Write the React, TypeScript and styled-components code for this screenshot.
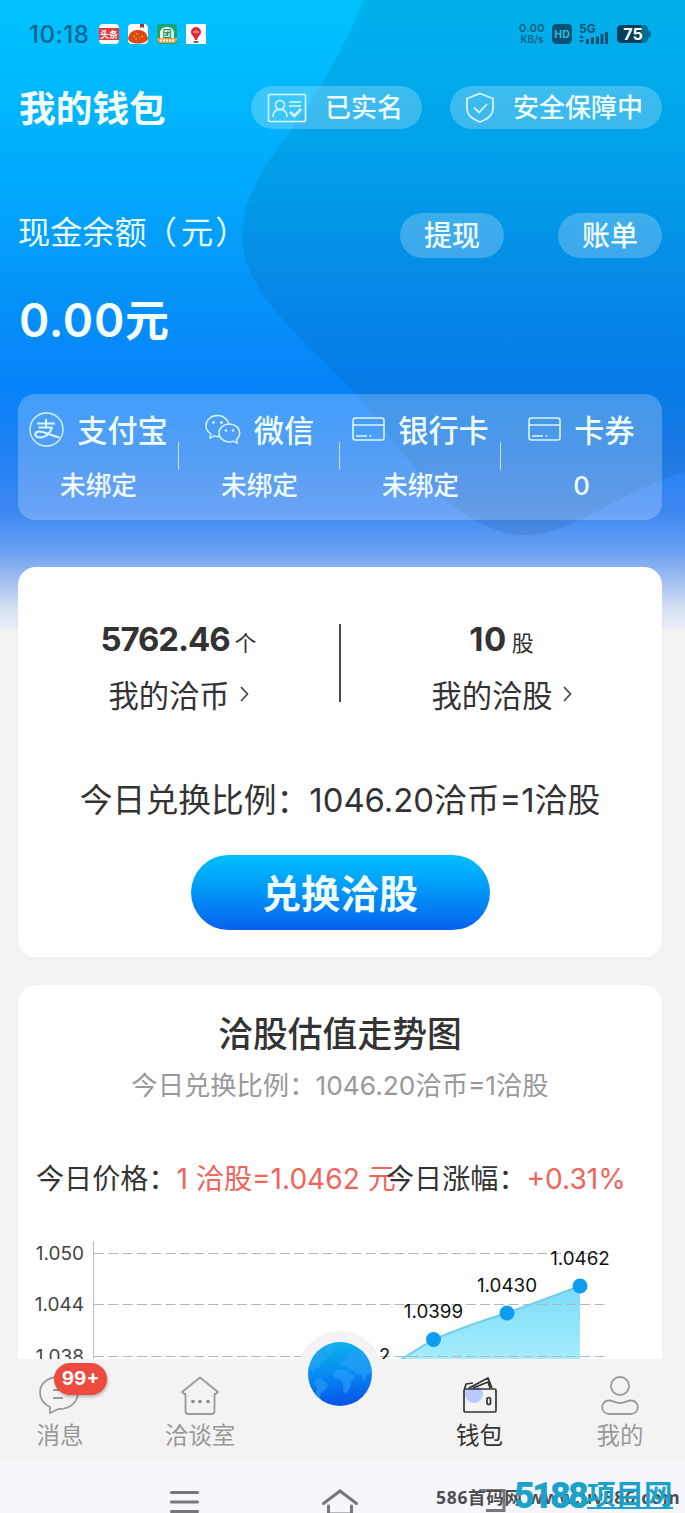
import React from 'react';
import styled, { createGlobalStyle } from 'styled-components';

const Global = createGlobalStyle`
  * { box-sizing: border-box; }
  body { margin: 0; background: #f3f3f3; }
  #root { font-family: Inter, "Noto Sans CJK SC", sans-serif; }
`;

const Screen = styled.div`
  position: relative;
  width: 685px;
  height: 1513px;
  overflow: hidden;
  display: flex;
  flex-direction: column;
  color: #333;
  background: linear-gradient(
      180deg,
      #00c2fe 0,
      #00b4fd 120px,
      #02a6fb 200px,
      #0691f9 300px,
      #0583f8 385px,
      #1f80f4 450px,
      #3c87f2 510px,
      #689ff1 550px,
      #aac4f0 585px,
      #d8e2f3 610px,
      #e9ebf5 628px,
      #f3f3f3 629px
    )
    #f3f3f3;
`;

const Backdrop = styled.svg`
  position: absolute;
  left: 0;
  top: 0;
`;

const Row = styled.div`
  display: flex;
  align-items: center;
`;

const StatusBar = styled(Row)`
  position: relative;
  height: 68px;
  padding: 0 34px 0 29px;
  justify-content: space-between;
  color: #07658f;
`;

const Clock = styled.span`
  font-size: 24px;
  font-weight: 500;
  width: 60px;
  margin-right: 10px;
  white-space: nowrap;
  letter-spacing: 0.5px;
`;

const AppIcons = styled(Row)`
  gap: 9px;
`;

const StatusRight = styled(Row)`
  gap: 7px;
`;

const Speed = styled.div`
  display: flex;
  flex-direction: column;
  align-items: center;
  width: 26px;
  font-size: 11px;
  line-height: 11px;
  font-weight: 600;
  white-space: nowrap;
  color: #07607f;
  span:first-child {
    letter-spacing: 0.3px;
  }
  span:last-child {
    font-size: 10px;
  }
`;

const TitleRow = styled(Row)`
  position: relative;
  height: 78px;
  padding: 0 23px 0 19px;
`;

const PageTitle = styled.h1`
  margin: 3px 0 0;
  flex: 1;
  font-size: 36.7px;
  line-height: 48px;
  font-weight: 700;
  color: #f2fdff;
`;

const Pill = styled.button<{ $w: number; $h: number; $ml: number; $icon?: boolean }>`
  display: flex;
  align-items: center;
  justify-content: ${p => (p.$icon ? 'flex-start' : 'center')};
  width: ${p => p.$w}px;
  height: ${p => p.$h}px;
  margin-left: ${p => p.$ml}px;
  padding: 2px ${p => (p.$icon ? 15 : 0)}px 0;
  gap: 18px;
  border: 0;
  border-radius: 23px;
  background: rgba(255, 255, 255, 0.23);
  color: #effdff;
  font: 500 ${p => (p.$icon ? 26 : 28)}px/38px Inter, 'Noto Sans CJK SC', sans-serif;
  white-space: nowrap;
`;

const BalanceRow = styled(Row)`
  position: relative;
  height: 46px;
  margin-top: 66px;
  padding: 0 23px 0 18px;
`;

const BalanceLabel = styled.div`
  flex: 1;
  font-size: 32.2px;
  line-height: 44px;
  margin-top: -4px;
  color: #e9fcff;
`;

const Paren = styled.span<{ $open?: boolean }>`
  margin: ${p => (p.$open ? '0 4px 0 -2px' : '0 0 0 2px')};
`;

const Balance = styled.div`
  position: relative;
  margin: 30px 0 0 19px;
  height: 64px;
  font-size: 46px;
  line-height: 64px;
  font-weight: 600;
  letter-spacing: 0.7px;
  color: #f5feff;
  small {
    font-size: 44px;
    font-weight: 700;
  }
`;

const Methods = styled.div`
  position: relative;
  display: grid;
  grid-template-columns: repeat(4, 161px);
  margin: 42px 23px 0 18px;
  height: 126px;
  border-radius: 17px;
  background: rgba(255, 255, 255, 0.23);
`;

const Method = styled.div`
  position: relative;
  display: flex;
  flex-direction: column;
  align-items: center;
  padding-top: 13px;
  color: #effdff;
  &:not(:last-child)::after {
    content: '';
    position: absolute;
    right: 0;
    top: 48px;
    width: 1px;
    height: 28px;
    background: rgba(255, 255, 255, 0.7);
  }
`;

const MethodName = styled(Row)`
  height: 44px;
  gap: 13px;
  font-size: 30.2px;
  font-weight: 500;
  white-space: nowrap;
`;

const MethodState = styled.div`
  margin-top: 16px;
  font-size: 25.7px;
  line-height: 38px;
  font-weight: 500;
`;

const Card = styled.section<{ $mt: number; $h: number; $open?: boolean }>`
  position: relative;
  display: flex;
  flex-direction: column;
  align-items: center;
  flex: none;
  margin: ${p => p.$mt}px 23px 0 18px;
  height: ${p => p.$h}px;
  border-radius: ${p => (p.$open ? '18px 18px 0 0' : '18px')};
  background: #fff;
`;

const Holdings = styled.div`
  display: grid;
  grid-template-columns: 321px 2px 321px;
  align-items: start;
  width: 100%;
  height: 78px;
  margin-top: 57px;
`;

const Rule = styled.div`
  height: 78px;
  background: #4a4a4a;
`;

const Holding = styled.div`
  display: flex;
  flex-direction: column;
  align-items: center;
  margin-top: -6px;
`;

const Amount = styled.div<{ $spacing: number }>`
  font-size: 33px;
  line-height: 42px;
  font-weight: 700;
  letter-spacing: ${p => p.$spacing}px;
  small {
    margin-left: 5px;
    font-size: 22px;
    font-weight: 400;
    letter-spacing: 0;
  }
`;

const HoldingName = styled(Row)`
  margin-top: 9px;
  height: 42px;
  gap: 10px;
  font-size: 30.3px;
`;

const Ratio = styled.div`
  margin-top: 75px;
  font-size: 32.8px;
  line-height: 46px;
  white-space: nowrap;
`;

const Exchange = styled.button`
  width: 299px;
  height: 75px;
  margin-top: 32px;
  padding: 0 0 3px;
  border: 0;
  border-radius: 38px;
  background: linear-gradient(180deg, #00bcfc 5%, #0096f8 48%, #0763ee 98%);
  color: #f0fdff;
  font: 700 39px/66px 'Noto Sans CJK SC', sans-serif;
`;

const ChartTitle = styled.h2`
  margin: 24px 0 0;
  font-size: 34.8px;
  line-height: 50px;
  font-weight: 500;
`;

const ChartSub = styled.div`
  margin-top: 8px;
  font-size: 26.3px;
  line-height: 38px;
  color: #999;
  white-space: nowrap;
`;

const Quotes = styled.div`
  display: grid;
  grid-template-columns: 350px 1fr;
  width: 100%;
  padding-left: 18px;
  margin-top: 53px;
  font-size: 28.1px;
  line-height: 42px;
  white-space: nowrap;
  color: #333;
  em {
    font-style: normal;
    color: #f0645a;
  }
`;

const Chart = styled.svg`
  margin-top: 40px;
  flex: none;
  align-self: flex-start;
  font-family: Inter, sans-serif;
`;

const TabBar = styled.nav`
  position: relative;
  flex: none;
  display: grid;
  grid-template-columns: 120px 160px 119px 161px 120px;
  height: 102px;
  background: #f3f3f3;
`;

const Tab = styled.div<{ $active?: boolean }>`
  position: relative;
  display: flex;
  flex-direction: column;
  align-items: center;
  padding-top: 14px;
  font-size: 23.5px;
  line-height: 33px;
  color: ${p => (p.$active ? '#333' : '#999')};
`;

const Badge = styled.span`
  position: absolute;
  left: 54px;
  top: 4px;
  width: 53px;
  height: 32px;
  border-radius: 16px;
  background: #ec4b3d;
  color: #fff;
  font-size: 19px;
  line-height: 32px;
  font-weight: 700;
  text-align: center;
  box-shadow: 1px 2px 3px rgba(0, 0, 0, 0.25);
`;

const GlobeTab = styled.div`
  position: relative;
`;

const GlobeHolder = styled.div`
  position: absolute;
  left: 17px;
  top: -28px;
  width: 86px;
  height: 86px;
  padding: 11px;
  border-radius: 50%;
  background: #f3f3f5;
`;

const SystemNav = styled.div`
  position: relative;
  display: flex;
  flex: none;
  height: 52px;
  padding: 28px 0 0 169px;
  gap: 121px;
  background: #f6f6fc;
`;

const SiteMark = styled.div`
  position: absolute;
  left: 436px;
  top: 23px;
  width: 249px;
  font: 700 17.5px/26px 'Open Sans', 'Noto Sans CJK SC', sans-serif;
  letter-spacing: 0.7px;
  color: #4e4e52;
  white-space: nowrap;
`;

const BrandMark = styled.div`
  position: absolute;
  left: 514px;
  top: 18px;
  display: flex;
  align-items: center;
  height: 30px;
  font: 700 29px/30px 'Noto Sans CJK SC', sans-serif;
  color: #1ba2c9;
  white-space: nowrap;
  b {
    width: 73px;
    padding-top: 4px;
    font: 900 36px/32px Roboto, sans-serif;
    letter-spacing: -2.9px;
  }
  span {
    height: 29px;
    line-height: 26px;
    font-size: 28.5px;
    border-bottom: 2px solid #1ba2c9;
  }
`;

const Chevron = () => (
  <svg width="9" height="16" viewBox="0 0 9 16" fill="none" stroke="#444" strokeWidth="1.7">
    <path d="M1 1l6.5 7L1 15" />
  </svg>
);

const CardIcon = () => (
  <svg width="33" height="24" viewBox="0 0 33 24" fill="none" stroke="#d9f8ff" strokeWidth="1.6">
    <rect x="1" y="1" width="31" height="22" rx="2.5" />
    <path d="M1 8h31M4 19h11M17.500 19h2M22 19h.1" />
  </svg>
);

const methods = [
  {
    name: '支付宝',
    state: '未绑定',
    icon: (
      <svg width="35" height="35" viewBox="0 0 35 35" fill="none" stroke="#d9f8ff">
        <circle cx="17.500" cy="17.500" r="16.500" strokeWidth="1.3" />
        <path d="M8 11.500h18M17 7v8.500M9.500 15.500h14" strokeWidth="2" />
        <path d="M23 15.500C21 22 16 25.500 11 25.500c-6 0-6-6-1-6 6 0 11 4 20.500 6" strokeWidth="2.200" />
      </svg>
    ),
  },
  {
    name: '微信',
    state: '未绑定',
    icon: (
      <svg width="36" height="30" viewBox="0 0 36 30" fill="none" stroke="#d9f8ff" strokeWidth="1.4">
        <path d="M14.500 22.500c-1.700.2-3.500 0-5-.6L5 24l.9-4.200C2.700 17.800 1 14.900 1 12 1 6 6 1.500 12.500 1.500c5.500 0 10 3.500 11.200 8.200" />
        <path d="M24.300 10C18.600 10 14 14 14 19s4.600 9 10.300 9c1.500 0 2.900-.3 4.200-.8l3.700 1.800-.8-3.500c2-1.600 3.300-3.900 3.300-6.500 0-5-4.600-9-10.400-9z" />
        <g fill="#d9f8ff" stroke="none">
          <circle cx="8.500" cy="8.500" r="1.400" />
          <circle cx="16.500" cy="8.500" r="1.400" />
          <circle cx="21" cy="16.500" r="1.300" />
          <circle cx="28" cy="16.500" r="1.300" />
        </g>
      </svg>
    ),
  },
  { name: '银行卡', state: '未绑定', icon: <CardIcon /> },
  { name: '卡券', state: '0', icon: <CardIcon /> },
];

const points = [
  { x: 415.5, y: 99.5, label: '1.0399' },
  { x: 489, y: 73, label: '1.0430' },
  { x: 562, y: 46, label: '1.0462' },
];

const TrendChart = () => (
  <Chart width="643" height="120" viewBox="0 0 643 120">
    <defs>
      <linearGradient id="area" x1="0" y1="0" x2="0" y2="1">
        <stop offset="0" stopColor="#7cdcf8" />
        <stop offset="1" stopColor="#a4edfc" />
      </linearGradient>
    </defs>
    <path d="M382 120L415.500 99.500Q450 85 489 73Q525 60 562 46V120z" fill="url(#area)" />
    <g stroke="#b5b5b5" strokeWidth="1" strokeDasharray="10 4.300">
      <path d="M76 13.500H588" />
      <path d="M76 64.500H588" />
      <path d="M76 116.500H588" />
    </g>
    <path d="M75.500 1V120" stroke="#bdbdbd" />
    <path d="M382 120L415.500 99.500Q450 85 489 73Q525 60 562 46" fill="none" stroke="#73cdea" strokeWidth="2" />
    {points.map(p => (
      <g key={p.label}>
        <circle cx={p.x} cy={p.y} r="7.500" fill="#0c9df0" />
        <text x={p.x} y={p.y - 21.5} textAnchor="middle" fontSize="18.800" fill="#111">
          {p.label}
        </text>
      </g>
    ))}
    <g fontSize="19" fill="#444" textAnchor="end">
      <text x="66" y="20">1.050</text>
      <text x="66" y="71">1.044</text>
      <text x="66" y="123">1.038</text>
    </g>
    <text x="361" y="122" fontSize="18.500" fill="#111">2</text>
  </Chart>
);

const Globe = () => (
  <svg width="64" height="64" viewBox="0 0 64 64">
    <defs>
      <linearGradient id="sea" x1="0.500" y1="0" x2="0.600" y2="1">
        <stop offset="0" stopColor="#0eb2ec" />
        <stop offset="0.500" stopColor="#0588f3" />
        <stop offset="1" stopColor="#0750e4" />
      </linearGradient>
      <clipPath id="disc">
        <circle cx="32" cy="32" r="32" />
      </clipPath>
    </defs>
    <circle cx="32" cy="32" r="32" fill="url(#sea)" />
    <g clipPath="url(#disc)" fill="#2fa4f8" fillOpacity="0.550">
      <path d="M2 20l5-9 7-4 2 6 4 1-3 5-4 1-1 5-4 1-3 4-3-3z" />
      <path d="M16 3l9-1 1 6-5 6-4-4z" />
      <path d="M7 38l5-2 8 6-2 5-5 4-2 7-3-6 1-6-3-4z" />
      <path d="M25 31l6-4 8 1 4 4 5 2-5 6-1 6-4 6-3-4v-7l-4-4-5-1z" />
      <path d="M31 24l2-5 5-2 3-6 8-4 9 6 6 9v9l-5 2-3 6-3-7-4 1-3-4-5-1-3-4-5 1z" />
    </g>
  </svg>
);

export default function App() {
  return (
    <>
      <Global />
      <Screen>
        <Backdrop width="685" height="560" viewBox="0 0 685 560">
          <path
            d="M364 0C340 57 314 101 276 151C249 188 240 217 243 245C248 286 277 317 342 380C377 414 400 454 435 490C468 522 500 535 525 535C574 535 622 489 685 472V0z"
            fill="#04426e"
            fillOpacity="0.130"
          />
        </Backdrop>

        <StatusBar>
          <Row>
            <Clock>10:18</Clock>
            <AppIcons>
              <svg width="20" height="20" viewBox="0 0 20 20">
                <rect width="20" height="20" rx="4" fill="#fff" />
                <path d="M0 4h20v12H0z" fill="#e43b3c" />
                <text x="10" y="13.500" fontSize="9" fontWeight="700" textAnchor="middle" fill="#fff">头条</text>
              </svg>
              <svg width="20" height="20" viewBox="0 0 20 20">
                <rect width="20" height="20" rx="4" fill="#fff" />
                <path d="M12 0h4v4l-2-1-2 1z" fill="#8c3c30" />
                <path d="M0 15C1 8 5 6 10 6s9 2 10 9c-2 6-18 6-20 0z" fill="#dd4711" />
                <path d="M5 12l2 1M15 12l-2 1M9 9v2M11 14h1M7 15h2" stroke="#ffc14d" />
              </svg>
              <svg width="20" height="20" viewBox="0 0 20 20">
                <rect width="20" height="20" rx="3" fill="#16a673" />
                <path d="M3 15V9c0-8 14-8 14 0v6z" fill="#e9fbec" />
                <text x="10" y="12.500" fontSize="9" fontWeight="700" textAnchor="middle" fill="#16905f">团</text>
                <path d="M0 14h20v2l-2 3H2l-2-3z" fill="#e9a14e" />
                <path d="M3 16.500h14" stroke="#fff" strokeDasharray="2 1" strokeWidth="2" />
              </svg>
              <svg width="20" height="20" viewBox="0 0 20 20">
                <rect width="20" height="20" rx="1" fill="#fff" />
                <path d="M10 3a5 5 0 0 1 5 5c0 3-3 4-4 8H9C8 12 5 11 5 8a5 5 0 0 1 5-5z" fill="#d92b35" />
                <path d="M8 7v2M10 6v3M12 7v2" stroke="#ffc5c5" />
                <path d="M7.500 18h5" stroke="#444" strokeWidth="1.500" />
              </svg>
            </AppIcons>
          </Row>
          <StatusRight>
            <Speed>
              <span>0.00</span>
              <span>KB/s</span>
            </Speed>
            <svg width="20" height="20" viewBox="0 0 20 20">
              <rect width="20" height="20" rx="4.500" fill="#075374" />
              <text x="10" y="14" fontSize="10.500" fontWeight="700" textAnchor="middle" fill="#3cb7df">HD</text>
            </svg>
            <svg width="30" height="22" viewBox="0 0 30 22" fill="#075374">
              <text x="0" y="10" fontSize="12" fontWeight="700">5G</text>
              <path d="M0 15l2.500-3L5 15zM0 17l2.500 3L5 17zM7 16h3v5H7zM12 14.500h3V21h-3zM17 13.500h3V21h-3zM21.500 11h3v10h-3zM26 9h3v12h-3z" />
            </svg>
            <svg width="35" height="20" viewBox="0 0 35 20">
              <path d="M6 1h21q5 0 5 4v1q3 1 3 4t-3 4v1q0 4-5 4H6q-5 0-5-5V6q0-5 5-5z" fill="#076d93" />
              <path d="M6 1h19v18H6q-5 0-5-5V6q0-5 5-5z" fill="#063f5b" />
              <text x="17" y="16" fontSize="16" fontWeight="700" textAnchor="middle" fill="#fff">75</text>
            </svg>
          </StatusRight>
        </StatusBar>

        <TitleRow>
          <PageTitle>我的钱包</PageTitle>
          <Pill $w={171} $h={43} $ml={0} $icon>
            <svg width="41" height="30" viewBox="0 0 41 30" fill="none" stroke="#d9f8ff" strokeWidth="1.600">
              <rect x="2.500" y="1.500" width="37" height="27" rx="1" />
              <circle cx="14" cy="12" r="4.500" />
              <path d="M7 24c0-5 3-7.500 7-7.500s7 2.500 7 7.500M23 9h12M23 13h12" />
              <path d="M24 19l4.500 4 6.500-7" strokeWidth="2.600" />
            </svg>
            已实名
          </Pill>
          <Pill $w={212} $h={43} $ml={28} $icon>
            <svg width="30" height="32" viewBox="0 0 30 32" fill="none" stroke="#d9f8ff" strokeWidth="1.800">
              <path d="M15 1.500l13 5V17c0 6-5 10-13 13C7 27 2 23 2 17V6.500z" />
              <path d="M9 15.500l5 5 8-8.500" />
            </svg>
            安全保障中
          </Pill>
        </TitleRow>

        <BalanceRow>
          <BalanceLabel>
            现金余额<Paren $open>（</Paren>元<Paren>）</Paren>
          </BalanceLabel>
          <Pill $w={104} $h={45} $ml={0}>提现</Pill>
          <Pill $w={104} $h={45} $ml={54}>账单</Pill>
        </BalanceRow>
        <Balance>0.00<small>元</small></Balance>

        <Methods>
          {methods.map(m => (
            <Method key={m.name}>
              <MethodName>
                {m.icon}
                <span>{m.name}</span>
              </MethodName>
              <MethodState>{m.state}</MethodState>
            </Method>
          ))}
        </Methods>

        <Card $mt={47} $h={390}>
          <Holdings>
            <Holding>
              <Amount $spacing={-1.1}>5762.46<small>个</small></Amount>
              <HoldingName>我的洽币<Chevron /></HoldingName>
            </Holding>
            <Rule />
            <Holding>
              <Amount $spacing={0.6}>10<small>股</small></Amount>
              <HoldingName>我的洽股<Chevron /></HoldingName>
            </Holding>
          </Holdings>
          <Ratio>今日兑换比例：1046.20洽币=1洽股</Ratio>
          <Exchange>兑换洽股</Exchange>
        </Card>

        <Card $mt={28} $h={374} $open>
          <ChartTitle>洽股估值走势图</ChartTitle>
          <ChartSub>今日兑换比例：1046.20洽币=1洽股</ChartSub>
          <Quotes>
            <span>今日价格：<em>1 洽股=1.0462 元</em></span>
            <span>今日涨幅：<em>+0.31%</em></span>
          </Quotes>
          <TrendChart />
        </Card>

        <TabBar>
          <Tab>
            <svg width="44" height="46" viewBox="0 0 44 46" fill="none" stroke="#9a9a9a" strokeWidth="1.800">
              <path d="M21 4c11 0 19 6 19 15.500S32 36 21 36c-2 0-4 2-9 4v-6C6 31 2 26 2 19.500 2 10 10 4 21 4z" />
              <path d="M15 17h10M15 25h10" />
            </svg>
            消息
            <Badge>99+</Badge>
          </Tab>
          <Tab>
            <svg width="40" height="46" viewBox="0 0 40 46" fill="none" stroke="#9a9a9a" strokeWidth="1.800" strokeLinejoin="round">
              <path d="M20 4.500L38 19l-2.500 2H34.500v17q0 3-3 3h-23q-3 0-3-3V21H4.500L2 19z" />
              <g fill="#8a8a8a" stroke="none">
                <circle cx="13" cy="28.500" r="1.800" />
                <circle cx="20" cy="28.500" r="1.800" />
                <circle cx="28" cy="28.500" r="1.800" />
              </g>
            </svg>
            洽谈室
          </Tab>
          <GlobeTab>
            <GlobeHolder>
              <Globe />
            </GlobeHolder>
          </GlobeTab>
          <Tab $active>
            <svg width="36" height="46" viewBox="0 0 36 46" fill="none" stroke="#333" strokeWidth="1.700" strokeLinejoin="round">
              <circle cx="12" cy="21" r="9" fill="#b9c9fb" stroke="none" />
              <rect x="2" y="16" width="32" height="23" rx="1.500" />
              <path d="M2.500 16l1.500-5 7-1M7 15L26 5l4 10M11 15l15-6 2 6" />
              <rect x="25" y="24.500" width="3.500" height="7" rx="1.700" />
            </svg>
            钱包
          </Tab>
          <Tab>
            <svg width="40" height="46" viewBox="0 0 40 46" fill="none" stroke="#9a9a9a" strokeWidth="1.800">
              <circle cx="20" cy="13" r="9" />
              <path d="M9 27.500c4 0 6 2.500 11 2.500s7-2.500 11-2.500c9 0 9.500 13.500-1 13.500H10C-.5 41 0 27.500 9 27.500z" />
            </svg>
            我的
          </Tab>
        </TabBar>

        <SystemNav>
          <svg width="31" height="24" viewBox="0 0 31 24" stroke="#77777b" strokeWidth="3.200" strokeLinecap="round">
            <path d="M2.500 3.500h26M2.500 13h26M2.500 22.500h26" />
          </svg>
          <svg width="38" height="24" viewBox="0 -3 38 24" fill="none" stroke="#77777b" strokeWidth="3" strokeLinecap="round">
            <path d="M2.500 11.500L19 -1L35.500 11.500M7.500 14v8h23v-8" />
          </svg>
          <svg width="29" height="24" viewBox="0 0 29 24" fill="none" stroke="#77777b" strokeWidth="3">
            <path d="M2 1.500h22v20H6" />
          </svg>
          <SiteMark>586首码网 www.uv586.com</SiteMark>
          <BrandMark>
            <b>5188</b>
            <span>项目网</span>
          </BrandMark>
        </SystemNav>
      </Screen>
    </>
  );
}
